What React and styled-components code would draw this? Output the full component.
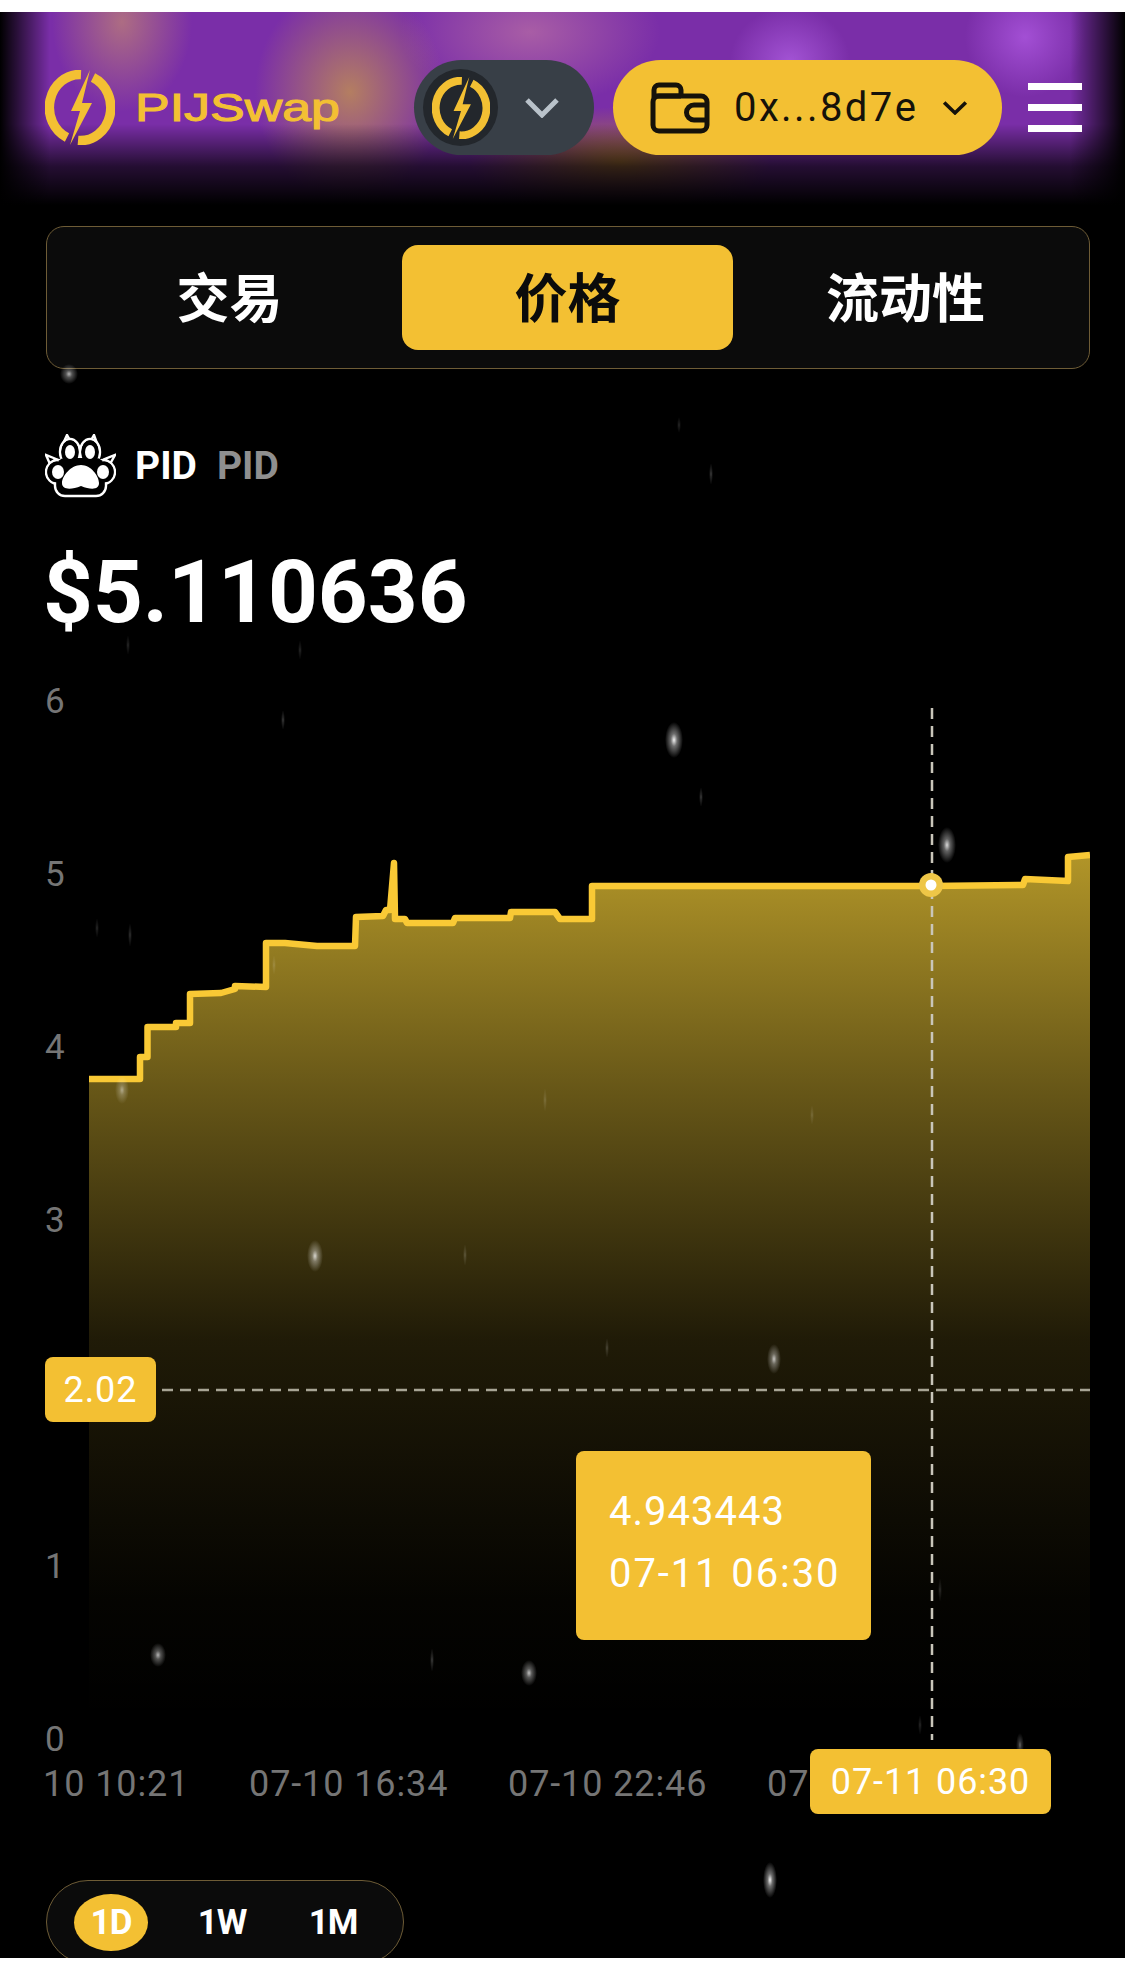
import styled, { createGlobalStyle } from "styled-components";

const YELLOW = "#f3c033";

const GlobalStyle = createGlobalStyle`
   html, body {
      margin: 0;
      padding: 0;
      background: #fff;
   }
   body {
      font-family: Roboto, "Noto Sans CJK SC", sans-serif;
   }
`;

const linePoints = [
   [89, 1079], [140, 1079], [140, 1057], [147.5, 1057], [147.5, 1027], [176, 1027], [176, 1023],
   [190, 1023], [190, 994], [221, 993], [235, 989], [235, 986], [266, 987], [266, 943], [285, 943],
   [317, 946], [355, 946], [356, 917], [383, 916], [386, 910], [390, 910], [394, 863], [395, 919],
   [405, 919], [407, 923], [453, 923], [455, 918], [510, 918], [511, 912], [555, 912], [560, 919],
   [592, 919], [592, 886], [931, 886], [1023, 885], [1025, 879], [1068, 881], [1068, 857], [1090, 855],
];

const yLabels = ["6", "5", "4", "3", "2", "1", "0"];
const xLabels = ["07-10 10:21", "07-10 16:34", "07-10 22:46", "07-11 04:58"];

// cx, cy, rx, ry, opacity
const particles = [
   [674, 740, 9, 18, 0.95], [947, 845, 9, 18, 0.85], [315, 1256, 8, 16, 0.8], [774, 1359, 7, 15, 0.75],
   [122, 1090, 7, 14, 0.5], [158, 1655, 8, 12, 0.7], [529, 1673, 8, 13, 0.75], [770, 1880, 7, 18, 0.95],
   [69, 374, 9, 10, 0.7], [711, 474, 2, 11, 0.3], [679, 425, 2, 8, 0.2], [283, 720, 2, 10, 0.3],
   [701, 797, 2, 10, 0.3], [130, 935, 2, 12, 0.25], [97, 928, 2, 10, 0.2], [274, 965, 2, 10, 0.2],
   [545, 1100, 2, 12, 0.2], [812, 1115, 2, 10, 0.2], [465, 1255, 2, 11, 0.25], [607, 1348, 2, 10, 0.25],
   [432, 1660, 2, 12, 0.3], [940, 1590, 2, 12, 0.2], [1020, 1745, 4, 12, 0.4], [920, 1725, 2, 10, 0.2],
   [300, 650, 2, 10, 0.2], [128, 645, 2, 10, 0.2],
];

const buildLine = () => linePoints.map(([x, y]) => `${x},${y}`).join(" ");

const Bolt = ({ width, height }) => (
   <svg width={width} height={height} viewBox="0 0 70 75" fill="none">
      <path d="M36 4.5 A30.5 33 0 0 0 22 67.4" stroke={YELLOW} strokeWidth="9.5" />
      <path d="M48 7.6 A30.5 33 0 0 1 33 70.5" stroke={YELLOW} strokeWidth="9.5" />
      <polygon points="45,0 26,41 35,41 25,75 47,33 37,33" fill={YELLOW} />
   </svg>
);

const Chevron = ({ width, height, color, stroke }) => (
   <svg width={width} height={height} viewBox="0 0 36 20" fill="none" preserveAspectRatio="none">
      <path d="M3 2 L18 17 L33 2" stroke={color} strokeWidth={stroke} />
   </svg>
);

const WalletIcon = () => (
   <svg width="60" height="52" viewBox="0 0 60 52" fill="none" stroke="#15120a" strokeWidth="5">
      <path d="M4 16 V8 a5 5 0 0 1 5 -5 H26 a5 5 0 0 1 5 5 V14" />
      <rect x="3" y="14" width="54" height="35" rx="6" />
      <path d="M57 23 H44 a7 7 0 0 0 0 15 H57" />
      <path d="M5 14 H31" />
   </svg>
);

const PawIcon = () => (
   <svg width="71" height="64" viewBox="0 0 71 64">
      <g fill="#000" stroke="#fff" strokeWidth="2.4">
         <polygon points="17,12 22,1 27,10" />
         <polygon points="44,10 49,1 53,12" />
         <polygon points="5,30 1,21 11,25" />
         <polygon points="65,30 70,21 60,25" />
         <ellipse cx="13" cy="38" rx="12" ry="12" />
         <ellipse cx="58" cy="38" rx="12" ry="12" />
         <ellipse cx="25" cy="18" rx="10" ry="13" />
         <ellipse cx="45" cy="18" rx="10" ry="13" />
         <rect x="10" y="26" width="51" height="36" rx="10" />
      </g>
      <g fill="#000">
         <ellipse cx="13" cy="38" rx="10.5" ry="10.5" />
         <ellipse cx="58" cy="38" rx="10.5" ry="10.5" />
         <ellipse cx="25" cy="18" rx="8.5" ry="11.5" />
         <ellipse cx="45" cy="18" rx="8.5" ry="11.5" />
         <rect x="12" y="24" width="47" height="36" rx="8" />
      </g>
      <g fill="#fff">
         <ellipse cx="13" cy="38" rx="6" ry="7" />
         <ellipse cx="58" cy="38" rx="6" ry="7" />
         <ellipse cx="25" cy="18" rx="5" ry="7" />
         <ellipse cx="45" cy="18" rx="5" ry="7" />
         <path d="M36 31 C46 31 54 42 54 49 C54 56 46 56 36 52 C26 56 17 56 17 49 C17 42 26 31 36 31Z" />
      </g>
   </svg>
);

const App = () => {
   const line = buildLine();
   const area = `89,1740 ${line} 1090,1740`;

   return (
      <>
         <GlobalStyle />
         <Screen>
            <Header>
               <Logo>
                  <Bolt width={70} height={75} />
                  <LogoWord viewBox="0 0 206 46" width="206" height="46">
                     <text x="0" y="34" textLength="205" lengthAdjust="spacingAndGlyphs">
                        PIJSwap
                     </text>
                  </LogoWord>
               </Logo>
               <TokenPill>
                  <TokenCircle>
                     <Bolt width={58} height={62} />
                  </TokenCircle>
                  <Chevron width={36} height={20} color="#b9c2ca" stroke={5} />
               </TokenPill>
               <WalletPill>
                  <WalletIcon />
                  <WalletAddress>0x...8d7e</WalletAddress>
                  <Chevron width={26} height={14} color="#15120a" stroke={5} />
               </WalletPill>
               <Hamburger>
                  <span />
                  <span />
                  <span />
               </Hamburger>
            </Header>

            <Tabs>
               <Tab>交易</Tab>
               <Tab $active>价格</Tab>
               <Tab>流动性</Tab>
            </Tabs>

            <TokenRow>
               <PawIcon />
               <TokenName>PID</TokenName>
               <TokenName $muted>PID</TokenName>
            </TokenRow>

            <Price>$5.110636</Price>

            <Chart>
               <ChartBody>
                  <YAxis>
                     {yLabels.map((label) => (
                        <YLabel key={label}>{label}</YLabel>
                     ))}
                  </YAxis>
                  <Plot viewBox="89 684 1001 1074" width="1001" height="1074">
                     <defs>
                        <linearGradient id="areaFill" gradientUnits="userSpaceOnUse" x1="0" y1="855" x2="0" y2="1720">
                           <stop offset="0" stopColor="#f6cf38" stopOpacity="0.72" />
                           <stop offset="0.27" stopColor="#f6cf38" stopOpacity="0.42" />
                           <stop offset="0.56" stopColor="#f6cf38" stopOpacity="0.13" />
                           <stop offset="0.86" stopColor="#f6cf38" stopOpacity="0.02" />
                           <stop offset="1" stopColor="#f6cf38" stopOpacity="0" />
                        </linearGradient>
                     </defs>
                     <polygon points={area} fill="url(#areaFill)" />
                     <polyline points={line} fill="none" stroke="#f9c935" strokeWidth="6.5" strokeLinejoin="round" />
                     <line x1="932" y1="708" x2="932" y2="1740" stroke="#c9c6ba" strokeWidth="2.5" strokeDasharray="11 7" />
                     <line x1="162" y1="1390" x2="1090" y2="1390" stroke="#a8a595" strokeWidth="2.5" strokeDasharray="11 7" />
                     <circle cx="931" cy="885" r="12" fill="#eec647" />
                     <circle cx="931" cy="885" r="5.5" fill="#fff" />
                  </Plot>
               </ChartBody>
               <XAxis>
                  {xLabels.map((label) => (
                     <XLabel key={label}>{label}</XLabel>
                  ))}
               </XAxis>
               <PriceBadge>2.02</PriceBadge>
               <Tooltip>
                  <TooltipValue>4.943443</TooltipValue>
                  <span>07-11 06:30</span>
               </Tooltip>
               <TimeBadge>07-11 06:30</TimeBadge>
            </Chart>

            <RangeSwitch>
               <RangeItem $active>1D</RangeItem>
               <RangeItem>1W</RangeItem>
               <RangeItem>1M</RangeItem>
            </RangeSwitch>

            <Particles viewBox="0 12 1125 1946" width="1125" height="1946">
               <defs>
                  <radialGradient id="flake">
                     <stop offset="0" stopColor="#fff" />
                     <stop offset="0.35" stopColor="#fff" stopOpacity="0.45" />
                     <stop offset="1" stopColor="#fff" stopOpacity="0" />
                  </radialGradient>
               </defs>
               {particles.map(([cx, cy, rx, ry, opacity]) => (
                  <ellipse key={`${cx}-${cy}`} cx={cx} cy={cy} rx={rx} ry={ry} opacity={opacity} fill="url(#flake)" />
               ))}
            </Particles>
         </Screen>
      </>
   );
};

export default App;

const Screen = styled.div`
   position: relative;
   width: 1125px;
   height: 1946px;
   margin-top: 12px;
   background: #000;
   overflow: hidden;
`;

const Header = styled.div`
   display: flex;
   align-items: flex-start;
   height: 193px;
   box-sizing: border-box;
   padding: 48px 43px 0 45px;
   background:
      linear-gradient(to right, #000 0, transparent 50px, transparent 1070px, #000 1125px),
      linear-gradient(to bottom, transparent 58%, rgba(0, 0, 0, 0.7) 80%, #000 100%),
      radial-gradient(ellipse 70px 90px at 122px 10px, rgba(195, 135, 115, 0.7), transparent),
      radial-gradient(ellipse 95px 110px at 350px 80px, rgba(190, 140, 85, 0.85), transparent),
      radial-gradient(ellipse 150px 55px at 620px 150px, rgba(185, 135, 30, 0.8), transparent),
      radial-gradient(ellipse 130px 75px at 530px 20px, rgba(180, 105, 165, 0.8), transparent),
      radial-gradient(ellipse 60px 55px at 790px 50px, rgba(170, 90, 220, 0.85), transparent),
      radial-gradient(ellipse 60px 60px at 1025px 25px, rgba(170, 85, 220, 0.85), transparent),
      #7a2ea8;
`;

const Logo = styled.div`
   display: flex;
   align-items: center;
   width: 369px;
   height: 95px;
   gap: 20px;
`;

const LogoWord = styled.svg`
   font-family: "Liberation Sans", sans-serif;
   font-size: 38px;
   fill: ${YELLOW};
   stroke: ${YELLOW};
   stroke-width: 1;
   margin-top: 4px;
`;

const TokenPill = styled.div`
   display: flex;
   align-items: center;
   gap: 26px;
   width: 180px;
   height: 95px;
   box-sizing: border-box;
   padding-left: 9px;
   border-radius: 48px;
   background: #383f47;
`;

const TokenCircle = styled.div`
   display: flex;
   align-items: center;
   justify-content: center;
   width: 75px;
   height: 77px;
   border-radius: 50%;
   background: #23272c;
`;

const WalletPill = styled.div`
   display: flex;
   align-items: center;
   width: 389px;
   height: 95px;
   box-sizing: border-box;
   margin-left: 19px;
   padding-left: 37px;
   border-radius: 48px;
   background: ${YELLOW};
`;

const WalletAddress = styled.span`
   margin: 0 24px 0 24px;
   font-size: 40px;
   letter-spacing: 2.4px;
   color: #15120a;
   line-height: 1;
`;

const Hamburger = styled.div`
   display: flex;
   flex-direction: column;
   gap: 14.5px;
   width: 54px;
   margin: 23px 0 0 26px;

   > span {
      display: block;
      height: 6.5px;
      background: #fff;
   }
`;

const Tabs = styled.div`
   display: grid;
   grid-template-columns: repeat(3, 331px);
   gap: 7px;
   width: 1044px;
   height: 143px;
   box-sizing: border-box;
   margin: 21px 0 0 46px;
   padding: 18px 17px;
   border: 1px solid #6e5c36;
   border-radius: 18px;
   background: #0b0b0b;
`;

const Tab = styled.div`
   display: flex;
   align-items: center;
   justify-content: center;
   padding-bottom: 6px;
   border-radius: 16px;
   font-family: "Noto Sans CJK SC", sans-serif;
   font-size: 53px;
   font-weight: 700;
   color: ${({ $active }) => ($active ? "#0b0b0b" : "#fff")};
   background: ${({ $active }) => ($active ? YELLOW : "transparent")};
`;

const TokenRow = styled.div`
   display: flex;
   align-items: center;
   height: 64px;
   margin: 65px 0 0 45px;
`;

const TokenName = styled.span`
   margin-left: ${({ $muted }) => ($muted ? "20px" : "19px")};
   font-size: 39px;
   font-weight: 700;
   color: ${({ $muted }) => ($muted ? "#8f8f8f" : "#fff")};
`;

const Price = styled.div`
   margin: 44px 0 41px 43px;
   height: 101px;
   font-size: 87px;
   font-weight: 700;
   line-height: 101px;
   color: #fff;
`;

const Chart = styled.div`
   position: relative;
   margin: 0 35px 0 45px;
   width: 1045px;
`;

const ChartBody = styled.div`
   display: grid;
   grid-template-columns: 44px 1001px;
   height: 1074px;
`;

const YAxis = styled.div`
   display: flex;
   flex-direction: column;
   justify-content: space-between;
   height: 1074px;
`;

const YLabel = styled.div`
   height: 36px;
   line-height: 36px;
   font-size: 35px;
   font-weight: 400;
   color: #757575;
`;

const Plot = styled.svg`
   display: block;
`;

const XAxis = styled.div`
   display: flex;
   gap: 58px;
   height: 44px;
   margin-top: 4px;
   overflow: hidden;
`;

const XLabel = styled.div`
   flex: none;
   width: 201px;
   line-height: 44px;
   font-size: 36px;
   font-weight: 400;
   letter-spacing: 0.9px;
   white-space: nowrap;
   color: #757575;

   &:first-child {
      margin-left: -55px;
   }

   &:last-child {
      width: 42px;
      overflow: hidden;
   }
`;

const Badge = styled.div`
   position: absolute;
   z-index: 2;
   display: flex;
   align-items: center;
   justify-content: center;
   height: 65px;
   border-radius: 8px;
   background: ${YELLOW};
   color: #fff;
   font-size: 36px;
   font-weight: 400;
   letter-spacing: 0.9px;
`;

const PriceBadge = styled(Badge)`
   left: 0;
   top: 673px;
   width: 111px;
`;

const TimeBadge = styled(Badge)`
   left: 765px;
   top: 1065px;
   width: 241px;
`;

const Tooltip = styled.div`
   position: absolute;
   z-index: 2;
   left: 531px;
   top: 767px;
   display: flex;
   flex-direction: column;
   gap: 14px;
   width: 295px;
   height: 189px;
   box-sizing: border-box;
   padding: 37px 0 0 33px;
   border-radius: 8px;
   background: ${YELLOW};
   color: #fff;
   font-size: 40px;
   font-weight: 400;
   letter-spacing: 1.9px;
   line-height: 48px;
`;

const TooltipValue = styled.span`
   letter-spacing: 1px;
`;

const RangeSwitch = styled.div`
   display: flex;
   align-items: center;
   gap: 37px;
   width: 358px;
   height: 84px;
   box-sizing: border-box;
   margin: 74px 0 0 46px;
   padding: 0 27px;
   border: 1px solid #6e5c36;
   border-radius: 42px;
   background: #0b0b0b;
`;

const RangeItem = styled.div`
   display: flex;
   align-items: center;
   justify-content: center;
   flex: none;
   width: 74px;
   height: 57px;
   border-radius: 50%;
   font-size: 35px;
   font-weight: 700;
   letter-spacing: -1px;
   color: #fff;
   background: ${({ $active }) => ($active ? YELLOW : "transparent")};
`;

const Particles = styled.svg`
   position: absolute;
   z-index: 1;
   left: 0;
   top: 0;
   pointer-events: none;
`;
